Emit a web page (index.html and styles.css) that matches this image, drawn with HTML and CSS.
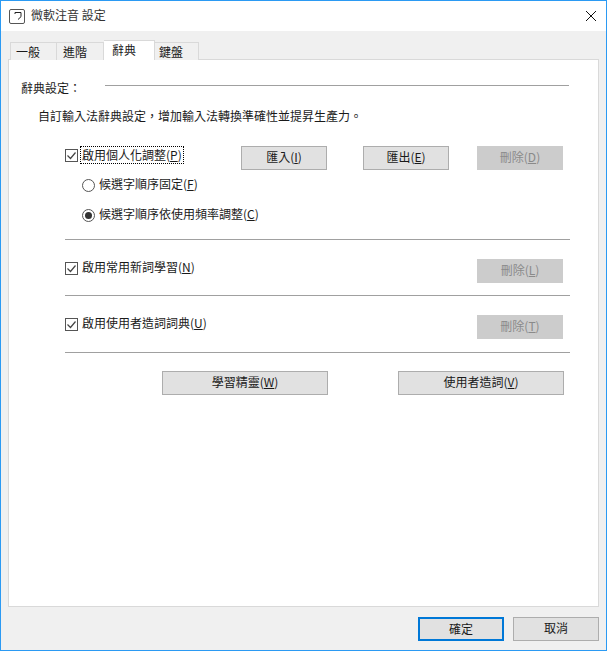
FILE: index.html
```html
<!DOCTYPE html>
<html lang="zh-Hant">
<head>
    <meta charset="UTF-8">
    <title>微軟注音 設定</title>
    <link rel="stylesheet" href="styles.css">
</head>
<body>
    <div class="window">
        <div class="titlebar">
            <svg class="app-icon" width="16" height="15" viewBox="0 0 16 15">
                <rect x="0.5" y="0.5" width="15" height="14" rx="1.5" fill="#fff" stroke="#555"/>
                <path d="M6 5V3.5h6v4.2L9 10.5" fill="none" stroke="#222" stroke-width="1"/>
            </svg>
            <span class="title">微軟注音 設定</span>
            <svg class="close" width="12" height="12" viewBox="0 0 12 12">
                <path d="M1 1l10 10M11 1L1 11" stroke="#111" stroke-width="1" fill="none"/>
            </svg>
        </div>

        <div class="body">
            <div class="tabs">
                <div class="tab tab-first">一般</div>
                <div class="tab tab-second">進階</div>
                <div class="tab tab-active">辭典</div>
                <div class="tab tab-last">鍵盤</div>
            </div>

            <div class="panel">
                <div class="group-head">
                    <span>辭典設定：</span>
                    <div class="group-line"></div>
                </div>
                <p class="desc">自訂輸入法辭典設定，增加輸入法轉換準確性並提昇生產力。</p>

                <div class="section">
                    <div class="row row-first">
                        <div class="check-label">
                            <svg class="checkbox" width="13" height="13" viewBox="0 0 13 13">
                                <rect x="0.5" y="0.5" width="12" height="12" fill="#fff" stroke="#555"/>
                                <path d="M2.5 6.5l3 3 5-6" fill="none" stroke="#444" stroke-width="1.2"/>
                            </svg>
                            <span class="focus">啟用個人化調整(<u>P</u>)</span>
                        </div>
                        <button class="btn btn-import">匯入(<u>I</u>)</button>
                        <button class="btn btn-export">匯出(<u>E</u>)</button>
                        <button class="btn btn-off">刪除(<u>D</u>)</button>
                    </div>
                    <div class="radio-label radio-one">
                        <span class="radio"></span>
                        <span class="label-text">候選字順序固定(<u>F</u>)</span>
                    </div>
                    <div class="radio-label radio-two">
                        <span class="radio radio-on"></span>
                        <span class="label-text">候選字順序依使用頻率調整(<u>C</u>)</span>
                    </div>

                    <hr class="sep sep-one">

                    <div class="row">
                        <div class="check-label">
                            <svg class="checkbox" width="13" height="13" viewBox="0 0 13 13">
                                <rect x="0.5" y="0.5" width="12" height="12" fill="#fff" stroke="#555"/>
                                <path d="M2.5 6.5l3 3 5-6" fill="none" stroke="#444" stroke-width="1.2"/>
                            </svg>
                            <span class="label-text">啟用常用新詞學習(<u>N</u>)</span>
                        </div>
                        <button class="btn btn-off">刪除(<u>L</u>)</button>
                    </div>

                    <hr class="sep sep-two">

                    <div class="row">
                        <div class="check-label">
                            <svg class="checkbox" width="13" height="13" viewBox="0 0 13 13">
                                <rect x="0.5" y="0.5" width="12" height="12" fill="#fff" stroke="#555"/>
                                <path d="M2.5 6.5l3 3 5-6" fill="none" stroke="#444" stroke-width="1.2"/>
                            </svg>
                            <span class="label-text">啟用使用者造詞詞典(<u>U</u>)</span>
                        </div>
                        <button class="btn btn-off">刪除(<u>T</u>)</button>
                    </div>

                    <hr class="sep sep-three">

                    <div class="row-wide">
                        <button class="btn btn-wide">學習精靈(<u>W</u>)</button>
                        <button class="btn btn-wide">使用者造詞(<u>V</u>)</button>
                    </div>
                </div>
            </div>

            <div class="footer">
                <button class="btn btn-default">確定</button>
                <button class="btn">取消</button>
            </div>
        </div>
    </div>
</body>
</html>
```

FILE: styles.css
```css
* {
    margin: 0;
    padding: 0;
    box-sizing: border-box;
}

body {
    font-family: "Noto Sans CJK TC", "Liberation Sans", sans-serif;
    font-size: 12px;
    color: #1a1a1a;
    background: #fff;
}

.window {
    width: 607px;
    height: 651px;
    display: flex;
    flex-direction: column;
    border: 1px solid #2b9af3;
}

.titlebar {
    height: 30px;
    flex: none;
    display: flex;
    align-items: center;
    padding: 0 9px 0 8px;
    background: #fff;
}

.title {
    margin-left: 6px;
    padding-bottom: 2px;
    line-height: 18px;
    color: #333;
}

.close {
    margin-left: auto;
}

.body {
    flex: 1;
    display: flex;
    flex-direction: column;
    background: #f0f0f0;
    padding: 9px 7px 9px 7px;
}

.tabs {
    display: flex;
    align-items: flex-end;
    height: 20px;
    padding-left: 2px;
    margin-bottom: -1px;
    position: relative;
    z-index: 1;
}

.tab {
    height: 18px;
    line-height: 17px;
    background: #f0f0f0;
    border: 1px solid #d9d9d9;
    border-bottom: none;
    border-left: none;
}

.tab-first {
    width: 47px;
    padding-left: 5px;
    border-left: 1px solid #d9d9d9;
}

.tab-second {
    width: 47px;
    padding-left: 6px;
}

.tab-active {
    width: 51px;
    height: 20px;
    padding-left: 8px;
    background: #fff;
}

.tab-last {
    width: 44px;
    padding-left: 4px;
}

.panel {
    flex: 1;
    background: #fff;
    border: 1px solid #d9d9d9;
    padding-top: 19px;
    padding-left: 12px;
}

.group-head {
    display: flex;
    line-height: 18px;
    height: 18px;
    padding-right: 29px;
}

.group-line {
    flex: 1;
    height: 1px;
    margin-top: 6px;
    margin-left: 24px;
    background: #a0a0a0;
}

.desc {
    margin-top: 10px;
    margin-left: 17px;
    line-height: 18px;
}

.section {
    width: 505px;
    margin-left: 44px;
}

.row {
    display: flex;
    justify-content: space-between;
    align-items: flex-start;
    width: 498px;
}

.row-first {
    justify-content: flex-start;
    margin-top: 21px;
}

.check-label {
    display: flex;
    align-items: center;
    height: 18px;
    line-height: 18px;
}

.row-first .check-label {
    width: 176px;
}

.checkbox {
    flex: none;
    margin-right: 4px;
}

.label-text {
    padding-bottom: 2px;
}

.focus {
    margin-left: -2px;
    padding: 0 2px 1px;
    line-height: 17px;
    outline: 1px dotted #000;
    outline-offset: -1px;
}

.radio-label {
    display: flex;
    align-items: center;
    height: 18px;
    line-height: 18px;
    margin-left: 17px;
}

.radio-one {
    margin-top: 6px;
}

.radio-two {
    margin-top: 12px;
}

.radio {
    width: 13px;
    height: 13px;
    margin-right: 4px;
    flex: none;
    display: flex;
    align-items: center;
    justify-content: center;
    border: 1px solid #555;
    border-radius: 50%;
    background: #fff;
}

.radio-on::after {
    content: "";
    width: 7px;
    height: 7px;
    border-radius: 50%;
    background: #333;
}

.sep {
    border: none;
    height: 1px;
    background: #a0a0a0;
}

.sep-one {
    margin-top: 15px;
    margin-bottom: 19px;
}

.sep-two {
    margin-top: 12px;
    margin-bottom: 19px;
}

.sep-three {
    margin-top: 13px;
    margin-bottom: 18px;
}

.btn {
    width: 86px;
    height: 24px;
    flex: none;
    font: inherit;
    line-height: 20px;
    padding-bottom: 2px;
    color: #1a1a1a;
    background: #e1e1e1;
    border: 1px solid #adadad;
}

.btn u {
    text-underline-offset: 1px;
}

.btn-import {
    margin-right: 36px;
}

.btn-export {
    margin-right: 28px;
}

.btn-off {
    color: #8a8a8a;
    background: #cccccc;
    border-color: #cccccc;
}

.row-wide {
    display: flex;
    justify-content: space-between;
    padding-left: 97px;
    width: 499px;
}

.btn-wide {
    width: 166px;
}

.footer {
    display: flex;
    justify-content: flex-end;
    gap: 9px;
    flex: none;
    margin-top: 10px;
}

.btn-default {
    border: 2px solid #0078d7;
}
```
